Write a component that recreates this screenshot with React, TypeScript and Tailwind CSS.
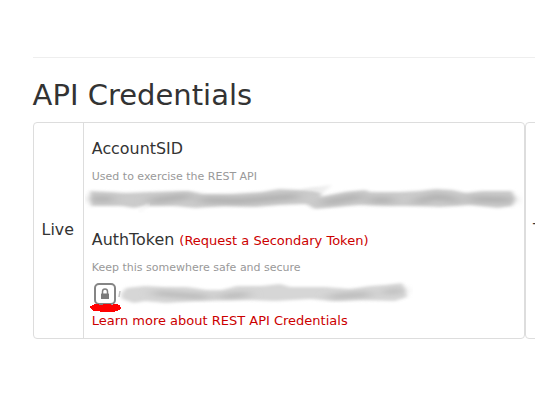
function AccountMask() {
  return (
    <svg className="block h-[30px] w-[438px]" viewBox="85 183 438 30" aria-hidden="true">
      <defs>
        <filter id="soft" x="-5%" y="-50%" width="110%" height="200%">
          <feGaussianBlur stdDeviation="2 1.7" />
        </filter>
        <filter id="softer" x="-20%" y="-80%" width="140%" height="260%">
          <feGaussianBlur stdDeviation="7 2.6" />
        </filter>
      </defs>
      <path
        filter="url(#soft)"
        fill="#cbcbcb"
        d="M90 191 L110 192 L125 193 L150 192 L188 191 L203 194 L230 194 L262 192 L279 189 L300 190 L318 189 L322 193 L320 197 L345 192 L365 190 L370 192 L400 192 L419 191 L436 189 L452 190 L466 193 L482 191 L512 191 L515 198 L512 206 L498 208 L470 205 L440 207 L420 206 L390 206 L360 205 L335 207 L315 209 L306 204 L280 205 L255 207 L225 206 L195 208 L175 206 L145 206 L134 208 L122 206 L98 206 L91 206 Z"
      />
      <path filter="url(#soft)" fill="#ededed" d="M302 189 L332 185 L322 193 Z" />
      <g filter="url(#softer)" fill="none" stroke="#b0b0b0" strokeWidth="6">
        <path d="M92 199 L112 199 M150 201 L190 196 M200 200 L240 201 L298 196 M323 203 L362 196 M370 200 L393 200 M415 202 L438 196 L458 201 M470 199 L512 200" />
      </g>
      <path filter="url(#soft)" fill="none" stroke="#f4f4f4" strokeWidth="2" d="M139 212 L149 204" />
    </svg>
  );
}

function TokenMask() {
  return (
    <svg className="block h-[28px] w-[296px]" viewBox="117 279 296 28" aria-hidden="true">
      <path
        filter="url(#soft)"
        fill="#d6d6d6"
        d="M121 294 L126 288 L145 286 L164 287 L187 287 L207 290 L222 290 L237 286 L262 286 L280 284 L290 287 L325 287 L350 289 L370 286 L385 285 L402 283 L405 289 L407 297 L395 301 L360 300 L335 301 L310 299 L275 301 L250 300 L225 300 L195 301 L166 303 L145 301 L134 303 L122 299 Z"
      />
      <g filter="url(#softer)" fill="none" stroke="#b8b8b8" strokeWidth="5">
        <path d="M154 293 L178 295 L208 297 M220 297 L248 294 M330 297 L370 294 M385 293 L402 290" />
      </g>
      <path stroke="#c5c5c5" strokeWidth="1.5" d="M120 291 L119 297" />
    </svg>
  );
}

function LockButton() {
  return (
    <button className="relative flex h-[22px] w-[22px] items-center justify-center rounded-[5px] border-2 border-[#858585] bg-white">
      <svg className="h-3 w-[10px]" viewBox="0 0 10 12" aria-hidden="true">
        <path d="M2.5 6V3.6a2.5 2.6 0 0 1 5 0V6" fill="none" stroke="#808080" strokeWidth="1.5" />
        <rect x="1" y="5.5" width="8" height="5.5" rx="0.5" fill="#7b7b7b" />
      </svg>
      <svg
        className="absolute top-[17px] -left-[6px] h-[11px] w-[33px]"
        viewBox="0 0 33 11"
        shapeRendering="crispEdges"
        aria-hidden="true"
      >
        <path
          fill="#f00"
          d="M0 4 L4 3 L4 2 L8 2 L9 3 L12 3 L13 2 L20 2 L22 3 L24 2 L27 2 L29 3 L30 4 L31 6 L30 8 L28 8 L27 9 L22 10 L10 10 L9 9 L3 9 L1 7 L0 6 Z"
        />
      </svg>
    </button>
  );
}

export default function App() {
  return (
    <main className="h-[411px] w-[535px] overflow-hidden bg-white pt-[57px] pl-[33px] font-['DejaVu_Sans',sans-serif] text-[#333]">
      <hr className="border-[#eee]" />
      <h1 className="mt-[17px] -ml-[0.4px] h-[47px] text-[29px] leading-[40px]">API Credentials</h1>
      <div className="flex h-[217px] w-[700px]">
        <section className="flex w-[492px] shrink-0 rounded-[4px] border border-[#ddd]">
          <div className="flex w-[49px] shrink-0 items-center pb-[2px] pl-[7.6px] text-[15.8px]">Live</div>
          <div className="flex-1 border-l border-[#ddd] pt-[15px] pl-[7.8px]">
            <h2 className="h-[31px] text-[15.9px] leading-[21px]">AccountSID</h2>
            <p className="h-[14px] text-[11px] leading-4 text-[#999]">Used to exercise the REST API</p>
            <div className="-ml-[6.8px] h-[46px]">
              <AccountMask />
            </div>
            <h2 className="h-[31px] text-[15.9px] leading-[21px]">
              AuthToken{" "}
              <a className="text-[13px] text-[#c00]">(Request a Secondary Token)</a>
            </h2>
            <p className="h-[19px] text-[11px] leading-4 text-[#999]">Keep this somewhere safe and secure</p>
            <div className="flex h-[32px] pt-[4px] pl-[2.2px]">
              <LockButton />
              <div className="-mt-[4px] ml-[1px]">
                <TokenMask />
              </div>
            </div>
            <a className="block text-[13px] leading-5 text-[#c00]">Learn more about REST API Credentials</a>
          </div>
        </section>
        <section className="flex flex-1 items-center rounded-[4px] border border-[#ddd] pl-[7px] text-[15.8px] pb-[2px]">Test</section>
      </div>
    </main>
  );
}
